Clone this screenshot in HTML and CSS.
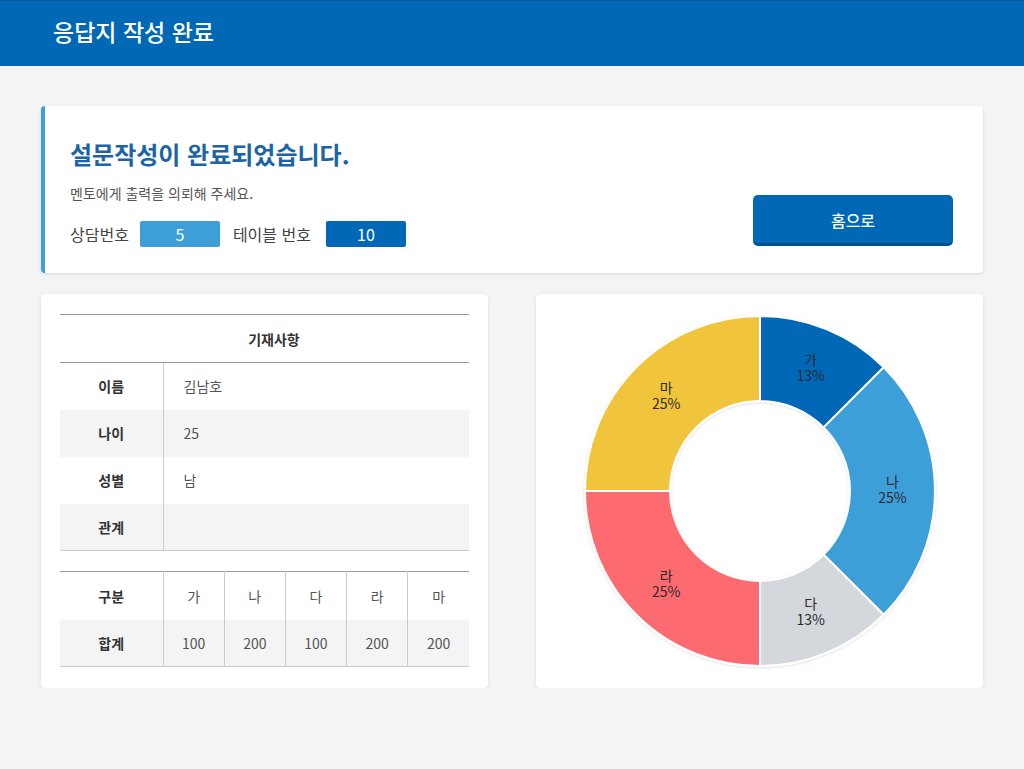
FILE: index.html
```html
<!DOCTYPE html>
<html lang="ko">
<head>
<meta charset="utf-8">
<title>응답지 작성 완료</title>
<link rel="stylesheet" href="styles.css">
</head>
<body>
<header class="topbar">
  <h1 class="topbar-title">응답지 작성 완료</h1>
</header>
<main class="content">
  <section class="card done-card">
    <div class="done-info">
      <h2 class="done-title">설문작성이 완료되었습니다.</h2>
      <p class="done-sub">멘토에게 출력을 의뢰해 주세요.</p>
      <div class="num-row">
        <span class="num-label">상담번호</span>
        <span class="num-box num-light">5</span>
        <span class="num-label num-label-2">테이블 번호</span>
        <span class="num-box num-dark">10</span>
      </div>
    </div>
    <button class="home-btn" type="button">홈으로</button>
  </section>

  <div class="lower">
    <section class="card table-card">
      <table class="info-table">
        <thead>
          <tr><th colspan="2" class="head-cell">기재사항</th></tr>
        </thead>
        <tbody>
          <tr><th>이름</th><td>김남호</td></tr>
          <tr class="alt"><th>나이</th><td>25</td></tr>
          <tr><th>성별</th><td>남</td></tr>
          <tr class="alt"><th>관계</th><td></td></tr>
        </tbody>
      </table>
      <table class="sum-table">
        <tbody>
          <tr><th>구분</th><td>가</td><td>나</td><td>다</td><td>라</td><td>마</td></tr>
          <tr class="alt"><th>합계</th><td>100</td><td>200</td><td>100</td><td>200</td><td>200</td></tr>
        </tbody>
      </table>
    </section>

    <section class="card chart-card">
      <svg class="donut" width="360" height="360" viewBox="0 0 360 360">
        <defs>
          <filter id="sh" x="-10%" y="-10%" width="120%" height="120%">
            <feDropShadow dx="0" dy="1" stdDeviation="1.5" flood-color="#000" flood-opacity="0.12"/>
          </filter>
        </defs>
        <g filter="url(#sh)" stroke="#fff" stroke-width="2" stroke-linejoin="round">
          <path fill="#0068b7" d="M180,5 A175,175 0 0 1 303.74,56.26 L243.64,116.36 A90,90 0 0 0 180,90 Z"/>
          <path fill="#3e9fd8" d="M303.74,56.26 A175,175 0 0 1 303.74,303.74 L243.64,243.64 A90,90 0 0 0 243.64,116.36 Z"/>
          <path fill="#d4d7dc" d="M303.74,303.74 A175,175 0 0 1 180,355 L180,270 A90,90 0 0 0 243.64,243.64 Z"/>
          <path fill="#fd6b70" d="M180,355 A175,175 0 0 1 5,180 L90,180 A90,90 0 0 0 180,270 Z"/>
          <path fill="#f0c53a" d="M5,180 A175,175 0 0 1 180,5 L180,90 A90,90 0 0 0 90,180 Z"/>
        </g>
        <g class="lbl" text-anchor="middle">
          <text x="230.7" y="49.6"><tspan x="230.7">가</tspan><tspan x="230.7" dy="16">13%</tspan></text>
          <text x="312.5" y="172"><tspan x="312.5">나</tspan><tspan x="312.5" dy="16">25%</tspan></text>
          <text x="230.7" y="294.4"><tspan x="230.7">다</tspan><tspan x="230.7" dy="16">13%</tspan></text>
          <text x="86.3" y="265.7"><tspan x="86.3">라</tspan><tspan x="86.3" dy="16">25%</tspan></text>
          <text x="86.3" y="78.3"><tspan x="86.3">마</tspan><tspan x="86.3" dy="16">25%</tspan></text>
        </g>
      </svg>
    </section>
  </div>
</main>
</body>
</html>
```

FILE: styles.css
```css
* { box-sizing: border-box; }

html, body {
  margin: 0;
  padding: 0;
  background: #f4f4f4;
  font-family: "Noto Sans CJK KR", "Noto Sans", "Liberation Sans", sans-serif;
  color: #333;
}

.topbar {
  height: 66px;
  background: #0068b5;
  border-top: 1px solid #00579a;
  display: flex;
  align-items: center;
  padding-left: 53px;
}

.topbar-title {
  margin: 0;
  font-size: 23px;
  font-weight: 500;
  color: #fff;
  line-height: 1;
  padding-bottom: 4px;
}

.content {
  padding: 40px 41px 0;
}

.card {
  background: #fff;
  border-radius: 4px;
  box-shadow: 0 1px 3px rgba(0, 0, 0, 0.12);
}

.done-card {
  height: 167px;
  border-left: 4px solid #3e9fd8;
  padding: 30px 30px 26px 25px;
  display: flex;
  justify-content: space-between;
  align-items: flex-end;
}

.done-title {
  margin: 0;
  font-size: 24px;
  line-height: 36px;
  font-weight: 700;
  color: #1c64a8;
}

.done-sub {
  margin: 11px 0 0;
  font-size: 14px;
  line-height: 20px;
  color: #555;
}

.num-row {
  margin-top: 18px;
  display: flex;
  align-items: center;
  height: 26px;
}

.num-label {
  font-size: 16px;
  color: #444;
  margin-right: 11px;
}

.num-label-2 {
  margin-left: 13px;
  margin-right: 15px;
}

.num-box {
  width: 80px;
  height: 26px;
  border-radius: 2px;
  color: #fff;
  font-size: 16px;
  display: flex;
  align-items: center;
  justify-content: center;
}

.num-light { background: #3e9fd8; }
.num-dark { background: #0068b7; }

.home-btn {
  width: 200px;
  height: 51px;
  margin-bottom: 1px;
  background: #0068b5;
  border: none;
  border-bottom: 3px solid #00528f;
  border-radius: 5px;
  color: #fff;
  font-family: inherit;
  font-size: 16px;
  font-weight: 500;
  padding-top: 2px;
}

.lower {
  margin-top: 21px;
  display: grid;
  grid-template-columns: minmax(0, 1fr) minmax(0, 1fr);
  gap: 48px;
}

.table-card {
  height: 394px;
  padding: 20px 19px 21px;
}

.chart-card {
  height: 394px;
  display: flex;
  align-items: center;
  justify-content: center;
}

table {
  width: 100%;
  border-collapse: collapse;
  font-size: 14px;
}

.info-table {
  border-top: 1px solid #999;
}

.info-table .head-cell {
  height: 48px;
  font-weight: 700;
  color: #333;
  border-bottom: 1px solid #999;
  text-align: center;
  padding-left: 20px;
}

.info-table tbody th,
.info-table tbody td {
  height: 47px;
}

.info-table tbody tr:last-child th,
.info-table tbody tr:last-child td {
  border-bottom: 1px solid #ccc;
}

.info-table tbody th {
  width: 103px;
  border-right: 1px solid #ccc;
  font-weight: 700;
  color: #333;
  text-align: center;
}

.info-table tbody td {
  padding-left: 20px;
  color: #555;
}

.alt th, .alt td { background: #f4f4f4; }

.sum-table {
  margin-top: 20px;
  border-top: 1px solid #999;
  table-layout: fixed;
}

.sum-table th {
  width: 103px;
  font-weight: 700;
  color: #333;
}

.sum-table th, .sum-table td {
  text-align: center;
  height: 47px;
  border-right: 1px solid #ccc;
  border-bottom: 1px solid #ccc;
}

.sum-table tr:first-child th, .sum-table tr:first-child td {
  height: 48px;
  border-bottom: none;
}

.sum-table td:last-child { border-right: none; }

.sum-table td { color: #555; }

.donut { display: block; }

.lbl text {
  font-size: 14px;
  fill: #2a2a2a;
  dominant-baseline: middle;
  font-family: "Noto Sans CJK KR", "Noto Sans", sans-serif;
}
```
